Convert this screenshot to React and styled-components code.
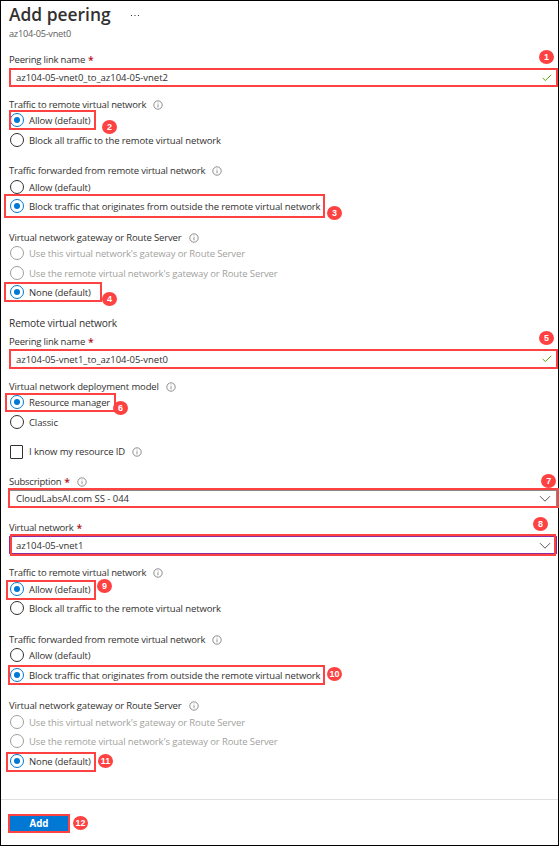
import React from "react";
import styled, { createGlobalStyle, css } from "styled-components";

const RED = "#fe4141";
const BLUE = "#0078d4";

const GlobalStyle = createGlobalStyle`
  *, *::before, *::after { box-sizing: border-box; }
  body { margin: 0; background: #fff; }
`;

const Page = styled.main`
  display: flex;
  flex-direction: column;
  width: 559px;
  height: 846px;
  border: 1px solid #000;
  padding: 5px 0 0 8px;
  background: #fff;
  color: #323130;
  font-family: "Open Sans", "Noto Sans", sans-serif;
  font-size: 9.5px;
  line-height: 14px;
  letter-spacing: -0.12px;
  white-space: nowrap;
`;

const Header = styled.header`
  display: flex;
  align-items: center;
  height: 16px;
  gap: 19px;
`;

const Title = styled.h1`
  margin: 0;
  font-size: 17.4px;
  font-weight: 600;
  line-height: 16px;
  letter-spacing: 0;
`;

const Subtitle = styled.p`
  margin: 5px 0 0;
  color: #605e5c;
  font-size: 9.2px;
  letter-spacing: -0.25px;
`;

const Row = styled.div`
  position: relative;
  display: flex;
  align-items: center;
  flex: none;
  height: 14px;
  margin-top: ${(p) => p.$gap}px;
`;

const Label = styled(Row)`
  gap: 7px;
  letter-spacing: ${(p) => p.$track || -0.13}px;
`;

const SectionTitle = styled(Row)`
  font-size: 10.2px;
  letter-spacing: -0.15px;
`;

const Required = styled.span`
  color: #b3121c;
  margin-left: -4px;
  font-size: 10.5px;
  font-weight: 600;
`;

const OptionText = styled.span`
  padding-top: ${(p) => (p.$raised ? 0 : 1)}px;
  margin-left: 5px;
  line-height: ${(p) => (p.$raised ? 14 : 15)}px;
  color: ${(p) => (p.$disabled ? "#a19f9d" : "#323130")};
`;

const FieldText = styled.span`
  padding-top: 1px;
  letter-spacing: ${(p) => p.$track || -0.03}px;
`;

const RadioMark = styled.span`
  display: grid;
  place-items: center;
  width: 14px;
  height: 14px;
  margin-left: 1px;
  border-radius: 50%;
  border: 1px solid #323130;
  ${(p) => p.$checked && css`border-color: ${BLUE};`}
  ${(p) => p.$disabled && css`border-color: #a19f9d;`}
  &::after {
    content: "";
    width: 6px;
    height: 6px;
    border-radius: 50%;
    background: ${(p) => (p.$checked ? BLUE : "transparent")};
  }
`;

const CheckMark = styled.span`
  width: 13px;
  height: 14px;
  margin-left: 1px;
  margin-right: 1px;
  border: 1px solid #323130;
  border-radius: 1px;
`;

const Outline = styled.span`
  position: absolute;
  left: ${(p) => p.$x}px;
  top: ${(p) => p.$y}px;
  width: ${(p) => p.$w}px;
  height: ${(p) => p.$h}px;
  border: 2px solid ${RED};
`;

const Badge = styled.span`
  position: absolute;
  left: ${(p) => p.$x}px;
  top: ${(p) => p.$y}px;
  display: flex;
  align-items: center;
  justify-content: center;
  width: 15px;
  height: 14px;
  border-radius: 50%;
  background: ${RED};
  color: #fff;
  font: 700 9px/14px "Liberation Sans", Arial, sans-serif;
`;

const Field = styled.div`
  display: flex;
  align-items: center;
  justify-content: space-between;
  flex: none;
  width: ${(p) => p.$w}px;
  height: ${(p) => p.$h}px;
  margin: ${(p) => p.$gap}px 0 0 ${(p) => p.$x || 0}px;
  padding: 0 ${(p) => p.$end}px 0 ${(p) => 5 - (p.$x || 0)}px;
  border: 2px solid ${RED};
  ${(p) => p.$tone === "gray" && css`box-shadow: inset -1px 1px 0 #8a8886;`}
  ${(p) => p.$tone === "purple" && css`
    box-shadow: inset 0 1px 0 #8a2da5, inset 0 -1px 0 #8a2da5;
    position: relative;
    &::before {
      content: "";
      position: absolute;
      inset: 0 -3px;
      border: solid #8a2da5;
      border-width: 0 1px;
    }
  `}
`;

const Footer = styled.footer`
  position: relative;
  flex: 1;
  margin: 31px 0 0 -8px;
  padding: 14px 0 0 7px;
  border-top: 1px solid #e1dfdd;
`;

const AddButton = styled.button`
  display: block;
  width: 62px;
  height: 19px;
  padding: 1px 0 0;
  border: 2px solid ${RED};
  background: ${BLUE};
  color: #fff;
  font: 700 9.7px/14px "Open Sans", sans-serif;
`;

const Icon = styled.svg`
  display: block;
  flex: none;
  fill: none;
`;

const InfoIcon = () => (
  <Icon width="10" height="10" viewBox="0 0 10 10" stroke="#605e5c" strokeWidth="0.7">
    <circle cx="5" cy="5" r="4.2" />
    <path d="M5 4.3V7.3M5 2.6V3.4" strokeWidth="0.7" />
  </Icon>
);

const TickIcon = () => (
  <Icon width="10" height="8" viewBox="0 0 10 8" stroke="#57a300" strokeWidth="1">
    <path d="M0.7 4L3.3 6.5L9.2 0.9" />
  </Icon>
);

const ChevronIcon = () => (
  <Icon width="12" height="9" viewBox="0 0 12 9" stroke="#484644" strokeWidth="0.9">
    <path d="M1 2.2L6 7.2L11 2.2" />
  </Icon>
);

const MoreIcon = () => (
  <Icon width="10" height="5" viewBox="0 0 10 5">
    <path d="M1 3h1v1H1zM4.5 3h1v1h-1zM8 3h1v1H8z" fill="#323130" />
  </Icon>
);

const FieldLabel = ({ gap, text, track, required, info, badge }) => (
  <Label $gap={gap} $track={track}>
    <span>{text}</span>
    {required && <Required>*</Required>}
    {info && <InfoIcon />}
    {badge && <Badge $x={badge[1]} $y={badge[2]}>{badge[0]}</Badge>}
  </Label>
);

const Radio = ({ gap, text, checked, disabled, box, badge }) => (
  <Row $gap={gap}>
    <RadioMark $checked={checked} $disabled={disabled} />
    <OptionText $disabled={disabled}>{text}</OptionText>
    {box && <Outline $x={box[0]} $y={box[1]} $w={box[2]} $h={box[3]} />}
    {badge && <Badge $x={badge[1]} $y={badge[2]}>{badge[0]}</Badge>}
  </Row>
);

export default function App() {
  return (
    <>
      <GlobalStyle />
      <Page>
        <Header>
          <Title>Add peering</Title>
          <MoreIcon />
        </Header>
        <Subtitle>az104-05-vnet0</Subtitle>

        <FieldLabel gap={12} text="Peering link name" track={-0.2} required badge={[1, 530, -3]} />
        <Field $gap={1} $w={549} $h={19} $end={4}>
          <FieldText>az104-05-vnet0_to_az104-05-vnet2</FieldText>
          <TickIcon />
        </Field>

        <FieldLabel gap={11} text="Traffic to remote virtual network" track={-0.19} info />
        <Radio gap={1} text="Allow (default)" checked box={[0, -3, 87, 20]} badge={[2, 93, 7]} />
        <Radio gap={6} text="Block all traffic to the remote virtual network" />

        <FieldLabel gap={17} text="Traffic forwarded from remote virtual network" track={-0.19} info />
        <Radio gap={2} text="Allow (default)" />
        <Radio
          gap={5}
          text="Block traffic that originates from outside the remote virtual network"
          checked
          box={[-5, -5, 321, 24]}
          badge={[3, 318, 7]}
        />

        <FieldLabel gap={18} text="Virtual network gateway or Route Server" track={-0.15} info />
        <Radio gap={1} text="Use this virtual network's gateway or Route Server" disabled />
        <Radio gap={6} text="Use the remote virtual network's gateway or Route Server" disabled />
        <Radio gap={5} text="None (default)" checked box={[-5, -3, 98, 20]} badge={[4, 93, 7]} />

        <SectionTitle $gap={17}>Remote virtual network</SectionTitle>
        <FieldLabel gap={5} text="Peering link name" track={-0.2} required badge={[5, 530, -4]} />
        <Field $gap={0} $w={549} $h={20} $end={4}>
          <FieldText>az104-05-vnet1_to_az104-05-vnet0</FieldText>
          <TickIcon />
        </Field>

        <FieldLabel gap={11} text="Virtual network deployment model" info />
        <Radio gap={1} text="Resource manager" checked box={[-4, -2, 111, 19]} badge={[6, 104, 6]} />
        <Radio gap={6} text="Classic" />

        <Row $gap={16}>
          <CheckMark />
          <OptionText $raised>I know my resource ID</OptionText>
          <Label $gap={0}><span /><InfoIcon /></Label>
        </Row>

        <FieldLabel gap={16} text="Subscription" track={-0.26} required info badge={[7, 532, -1]} />
        <Field $gap={-1} $x={-1} $w={551} $h={20} $end={6} $tone="gray">
          <FieldText>CloudLabsAI.com SS - 044</FieldText>
          <ChevronIcon />
        </Field>

        <FieldLabel gap={13} text="Virtual network" track={-0.22} required badge={[8, 524, -4]} />
        <Field $gap={-1} $x={1} $w={546} $h={22} $end={3} $tone="purple">
          <FieldText>az104-05-vnet1</FieldText>
          <ChevronIcon />
        </Field>

        <FieldLabel gap={10} text="Traffic to remote virtual network" track={-0.19} info />
        <Radio gap={2} text="Allow (default)" checked box={[-3, -2, 90, 20]} badge={[9, 88, -3]} />
        <Radio gap={5} text="Block all traffic to the remote virtual network" />

        <FieldLabel gap={18} text="Traffic forwarded from remote virtual network" track={-0.19} info />
        <Radio gap={1} text="Allow (default)" />
        <Radio
          gap={6}
          text="Block traffic that originates from outside the remote virtual network"
          checked
          box={[-1, -3, 317, 20]}
          badge={[10, 318, -1]}
        />

        <FieldLabel gap={17} text="Virtual network gateway or Route Server" track={-0.15} info />
        <Radio gap={2} text="Use this virtual network's gateway or Route Server" disabled />
        <Radio gap={5} text="Use the remote virtual network's gateway or Route Server" disabled />
        <Radio gap={6} text="None (default)" checked box={[-3, -2, 90, 20]} badge={[11, 89, 0]} />

        <Footer>
          <AddButton type="button">Add</AddButton>
          <Badge $x={72} $y={16}>12</Badge>
        </Footer>
      </Page>
    </>
  );
}
